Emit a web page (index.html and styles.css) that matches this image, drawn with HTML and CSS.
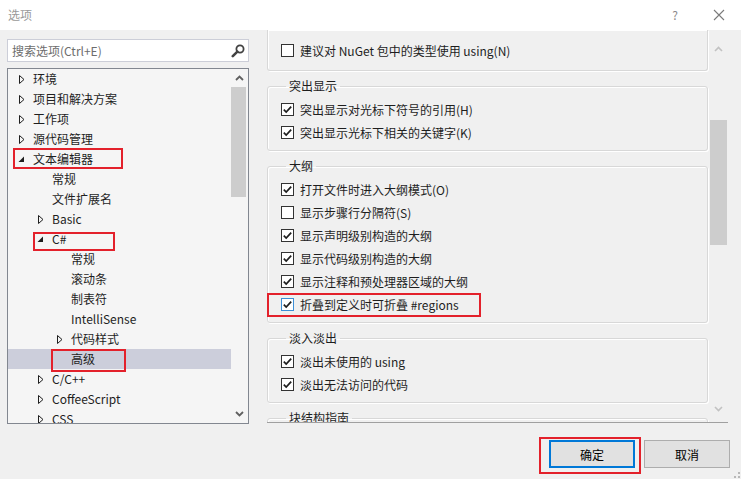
FILE: index.html
```html
<!DOCTYPE html>
<html lang="zh-CN">
<head>
    <meta charset="UTF-8">
    <meta name="viewport" content="width=device-width, initial-scale=1.0">
    <title>选项</title>
    <link rel="stylesheet" href="styles.css">
</head>
<body>
<div class="dialog">

    <div class="titlebar">
        <span class="title">选项</span>
        <span class="help">?</span>
        <svg class="close" width="12" height="12" viewBox="0 0 12 12"><path d="M1 1L11 11M11 1L1 11" stroke="#7a7a7a" stroke-width="1.1" fill="none"/></svg>
    </div>

    <div class="main">
        <!-- left: search + category tree -->
        <div class="nav">
            <div class="search">
                <span class="placeholder">搜索选项(Ctrl+E)</span>
                <svg class="search-icon" width="14" height="14" viewBox="0 0 14 14">
                    <circle cx="9" cy="5" r="3.6" stroke="#424242" stroke-width="1.8" fill="none"/>
                    <path d="M6.4 7.6L1.8 12.2" stroke="#424242" stroke-width="2.6" stroke-linecap="round"/>
                </svg>
            </div>

            <div class="tree">
                <ul class="rows">
                    <li class="row lv0"><span class="arrow"><svg width="6" height="9" viewBox="0 0 6 9"><path d="M0.5 0.5L5 4.5L0.5 8.5Z" fill="none" stroke="#1e1e1e"/></svg></span>环境</li>
                    <li class="row lv0"><span class="arrow"><svg width="6" height="9" viewBox="0 0 6 9"><path d="M0.5 0.5L5 4.5L0.5 8.5Z" fill="none" stroke="#1e1e1e"/></svg></span>项目和解决方案</li>
                    <li class="row lv0"><span class="arrow"><svg width="6" height="9" viewBox="0 0 6 9"><path d="M0.5 0.5L5 4.5L0.5 8.5Z" fill="none" stroke="#1e1e1e"/></svg></span>工作项</li>
                    <li class="row lv0"><span class="arrow"><svg width="6" height="9" viewBox="0 0 6 9"><path d="M0.5 0.5L5 4.5L0.5 8.5Z" fill="none" stroke="#1e1e1e"/></svg></span>源代码管理</li>
                    <li class="row lv0"><span class="arrow open"><svg width="7" height="7" viewBox="0 0 7 7"><path d="M6 0.5L6 6L0.5 6Z" fill="#1e1e1e"/></svg></span>文本编辑器<span class="mark mark-editor"></span></li>
                    <li class="row lv1"><span class="arrow"></span>常规</li>
                    <li class="row lv1"><span class="arrow"></span>文件扩展名</li>
                    <li class="row lv1"><span class="arrow"><svg width="6" height="9" viewBox="0 0 6 9"><path d="M0.5 0.5L5 4.5L0.5 8.5Z" fill="none" stroke="#1e1e1e"/></svg></span>Basic</li>
                    <li class="row lv1"><span class="arrow open"><svg width="7" height="7" viewBox="0 0 7 7"><path d="M6 0.5L6 6L0.5 6Z" fill="#1e1e1e"/></svg></span>C#<span class="mark mark-cs"></span></li>
                    <li class="row lv2"><span class="arrow"></span>常规</li>
                    <li class="row lv2"><span class="arrow"></span>滚动条</li>
                    <li class="row lv2"><span class="arrow"></span>制表符</li>
                    <li class="row lv2"><span class="arrow"></span>IntelliSense</li>
                    <li class="row lv2"><span class="arrow"><svg width="6" height="9" viewBox="0 0 6 9"><path d="M0.5 0.5L5 4.5L0.5 8.5Z" fill="none" stroke="#1e1e1e"/></svg></span>代码样式</li>
                    <li class="row lv2 selected"><span class="arrow"></span>高级<span class="mark mark-adv"></span></li>
                    <li class="row lv1"><span class="arrow"><svg width="6" height="9" viewBox="0 0 6 9"><path d="M0.5 0.5L5 4.5L0.5 8.5Z" fill="none" stroke="#1e1e1e"/></svg></span>C/C++</li>
                    <li class="row lv1"><span class="arrow"><svg width="6" height="9" viewBox="0 0 6 9"><path d="M0.5 0.5L5 4.5L0.5 8.5Z" fill="none" stroke="#1e1e1e"/></svg></span>CoffeeScript</li>
                    <li class="row lv1"><span class="arrow"><svg width="6" height="9" viewBox="0 0 6 9"><path d="M0.5 0.5L5 4.5L0.5 8.5Z" fill="none" stroke="#1e1e1e"/></svg></span>CSS</li>
                </ul>
                <div class="vscroll tree-scroll">
                    <span class="sb-btn"><svg width="9" height="6" viewBox="0 0 9 6"><path d="M1 5L4.5 1.5L8 5" stroke="#606060" stroke-width="1.8" fill="none"/></svg></span>
                    <span class="thumb tree-thumb"></span>
                    <span class="sb-btn sb-down"><svg width="9" height="6" viewBox="0 0 9 6"><path d="M1 1L4.5 4.5L8 1" stroke="#606060" stroke-width="1.8" fill="none"/></svg></span>
                </div>
            </div>
        </div>

        <!-- right: option page -->
        <div class="pane">
            <div class="groups">
                <div class="group clipped">
                    <label class="check"><span class="box"></span>建议对 NuGet 包中的类型使用 using(N)</label>
                </div>

                <fieldset class="group">
                    <legend>突出显示</legend>
                    <label class="check"><span class="box on"><svg width="11" height="11" viewBox="0 0 11 11"><path d="M1.8 5.6L4.2 8L9.2 2.6" stroke="#1e1e1e" stroke-width="1.7" fill="none"/></svg></span>突出显示对光标下符号的引用(H)</label>
                    <label class="check"><span class="box on"><svg width="11" height="11" viewBox="0 0 11 11"><path d="M1.8 5.6L4.2 8L9.2 2.6" stroke="#1e1e1e" stroke-width="1.7" fill="none"/></svg></span>突出显示光标下相关的关键字(K)</label>
                </fieldset>

                <fieldset class="group">
                    <legend>大纲</legend>
                    <label class="check"><span class="box on"><svg width="11" height="11" viewBox="0 0 11 11"><path d="M1.8 5.6L4.2 8L9.2 2.6" stroke="#1e1e1e" stroke-width="1.7" fill="none"/></svg></span>打开文件时进入大纲模式(O)</label>
                    <label class="check"><span class="box"></span>显示步骤行分隔符(S)</label>
                    <label class="check"><span class="box on"><svg width="11" height="11" viewBox="0 0 11 11"><path d="M1.8 5.6L4.2 8L9.2 2.6" stroke="#1e1e1e" stroke-width="1.7" fill="none"/></svg></span>显示声明级别构造的大纲</label>
                    <label class="check"><span class="box on"><svg width="11" height="11" viewBox="0 0 11 11"><path d="M1.8 5.6L4.2 8L9.2 2.6" stroke="#1e1e1e" stroke-width="1.7" fill="none"/></svg></span>显示代码级别构造的大纲</label>
                    <label class="check"><span class="box on"><svg width="11" height="11" viewBox="0 0 11 11"><path d="M1.8 5.6L4.2 8L9.2 2.6" stroke="#1e1e1e" stroke-width="1.7" fill="none"/></svg></span>显示注释和预处理器区域的大纲</label>
                    <label class="check"><span class="box on focus"><svg width="11" height="11" viewBox="0 0 11 11"><path d="M1.8 5.6L4.2 8L9.2 2.6" stroke="#1e1e1e" stroke-width="1.7" fill="none"/></svg></span>折叠到定义时可折叠 #regions<span class="mark mark-regions"></span></label>
                </fieldset>

                <fieldset class="group">
                    <legend>淡入淡出</legend>
                    <label class="check"><span class="box on"><svg width="11" height="11" viewBox="0 0 11 11"><path d="M1.8 5.6L4.2 8L9.2 2.6" stroke="#1e1e1e" stroke-width="1.7" fill="none"/></svg></span>淡出未使用的 using</label>
                    <label class="check"><span class="box on"><svg width="11" height="11" viewBox="0 0 11 11"><path d="M1.8 5.6L4.2 8L9.2 2.6" stroke="#1e1e1e" stroke-width="1.7" fill="none"/></svg></span>淡出无法访问的代码</label>
                </fieldset>

                <fieldset class="group">
                    <legend>块结构指南</legend>
                </fieldset>
            </div>
            <div class="vscroll pane-scroll">
                <span class="sb-btn pane-up"><svg width="9" height="6" viewBox="0 0 9 6"><path d="M1 5L4.5 1.5L8 5" stroke="#c2c2c2" stroke-width="1.6" fill="none"/></svg></span>
                <span class="thumb pane-thumb"></span>
                <span class="sb-btn sb-down pane-down"><svg width="9" height="6" viewBox="0 0 9 6"><path d="M1 1L4.5 4.5L8 1" stroke="#c2c2c2" stroke-width="1.6" fill="none"/></svg></span>
            </div>
        </div>
    </div>

    <div class="footer">
        <span class="btn-wrap"><button class="btn default">确定</button><span class="mark mark-ok"></span></span>
        <button class="btn">取消</button>
        <svg class="grip" width="6" height="6" viewBox="0 0 6 6"><rect x="4" y="0" width="2" height="2" fill="#b8b8b8"/><rect x="0" y="4" width="2" height="2" fill="#b8b8b8"/><rect x="4" y="4" width="2" height="2" fill="#b8b8b8"/></svg>
    </div>

</div>
</body>
</html>
```

FILE: styles.css
```css
* {
    margin: 0;
    padding: 0;
    box-sizing: border-box;
}

body {
    background: #f0f0f0;
    font-family: "Noto Sans CJK SC", "Noto Sans", sans-serif;
    font-size: 12px;
    color: #1e1e1e;
}

.dialog {
    position: relative;
    width: 741px;
    height: 479px;
    overflow: hidden;
}

/* title bar */
.titlebar {
    height: 30px;
    background: #fff;
    display: flex;
    align-items: center;
    padding-left: 8px;
}

.title {
    color: #999;
    flex: 1;
    line-height: 16px;
}

.help {
    color: #8a8a8a;
    width: 12px;
    text-align: center;
    margin-right: 32px;
    line-height: 16px;
}

.close {
    margin-right: 16px;
}

/* main area */
.main {
    display: flex;
    align-items: flex-start;
    height: 394px;
}

.nav {
    width: 249px;
    padding: 9px 0 0 7px;
}

.search {
    height: 23px;
    background: #fff;
    border: 1px solid #ccced8;
    display: flex;
    align-items: center;
    padding: 0 3px 0 4px;
    margin-bottom: 6px;
}

.placeholder {
    flex: 1;
    color: #6d6d6d;
    line-height: 16px;
}

.tree {
    height: 356px;
    border: 1px solid #828790;
    background: #f5f5f5;
    display: flex;
    overflow: hidden;
}

.rows {
    list-style: none;
    flex: 1;
}

.row {
    position: relative;
    display: flex;
    align-items: center;
    height: 20px;
    line-height: 16px;
    white-space: nowrap;
    padding-left: 11px;
}

.row.lv1 { padding-left: 30px; }
.row.lv2 { padding-left: 49px; }

.row.selected {
    background: #cccedb;
}

.arrow {
    width: 14px;
    height: 20px;
    display: flex;
    align-items: center;
    flex-shrink: 0;
}

.arrow.open {
    margin-left: -1px;
    width: 15px;
    padding-top: 1px;
}

/* scrollbars */
.vscroll {
    display: flex;
    flex-direction: column;
    align-items: center;
    flex-shrink: 0;
}

.sb-btn {
    height: 17px;
    width: 100%;
    display: flex;
    align-items: center;
    justify-content: center;
}

.sb-down {
    margin-top: auto;
}

.thumb {
    background: #cdcdcd;
}

.tree-scroll {
    width: 17px;
}

.tree-thumb {
    width: 15px;
    height: 110px;
    margin: 1px 2px 0 0;
}

.tree-scroll .sb-down {
    margin-bottom: 1px;
}

/* option page */
.pane {
    width: 461px;
    height: 393px;
    margin-left: 18px;
    border-bottom: 1px solid #a0a0a0;
    display: flex;
    overflow: hidden;
}

.groups {
    width: 442px;
    padding-right: 1px;
}

.group {
    border: 1px solid #d8d8d8;
    border-radius: 3px;
    box-shadow: inset 1px 1px 0 #fff, 1px 1px 0 #fff;
    padding: 4px 8px 6px 13px;
    margin-top: 7px;
    min-width: 0;
}

.group.clipped {
    border-top: none;
    border-radius: 0 0 3px 3px;
    padding-top: 9px;
    padding-bottom: 8px;
    margin-top: 0;
}

.group legend {
    line-height: 16px;
    padding: 0 3px;
    margin-left: 5px;
}

.check {
    position: relative;
    display: flex;
    align-items: center;
    gap: 6px;
    height: 23px;
    line-height: 16px;
    white-space: nowrap;
}

.box {
    width: 13px;
    height: 13px;
    border: 1px solid #333;
    background: #fff;
    display: flex;
    align-items: center;
    justify-content: center;
    flex-shrink: 0;
}

.box.focus {
    border-color: #3d8fd6;
}

.pane-scroll {
    width: 19px;
}

.pane-up {
    margin-top: 10px;
}

.pane-thumb {
    width: 17px;
    height: 125px;
    margin-top: 63px;
}

.pane-down {
    margin-bottom: 5px;
}

/* red annotation boxes */
.mark {
    position: absolute;
    border: 2px solid #e3212b;
    pointer-events: none;
}

.mark-editor { left: 5px; top: -1px; width: 110px; height: 21px; }
.mark-cs { left: 25px; top: 3px; width: 82px; height: 19px; }
.mark-adv { left: 43px; top: 0; width: 75px; height: 23px; }
.mark-regions { left: -14px; top: 0; width: 214px; height: 24px; }
.mark-ok { left: -10px; top: -3px; width: 102px; height: 37px; }

/* buttons */
.footer {
    display: flex;
    justify-content: flex-end;
    gap: 9px;
    padding: 16px 11px 0 0;
}

.btn-wrap {
    position: relative;
    display: flex;
}

.btn {
    width: 86px;
    height: 28px;
    background: #e1e1e1;
    border: 1px solid #adadad;
    font-family: inherit;
    font-size: 12px;
    color: #000;
}

.btn.default {
    border: 2px solid #0078d7;
}

.grip {
    position: absolute;
    right: 1px;
    bottom: 1px;
}
```
